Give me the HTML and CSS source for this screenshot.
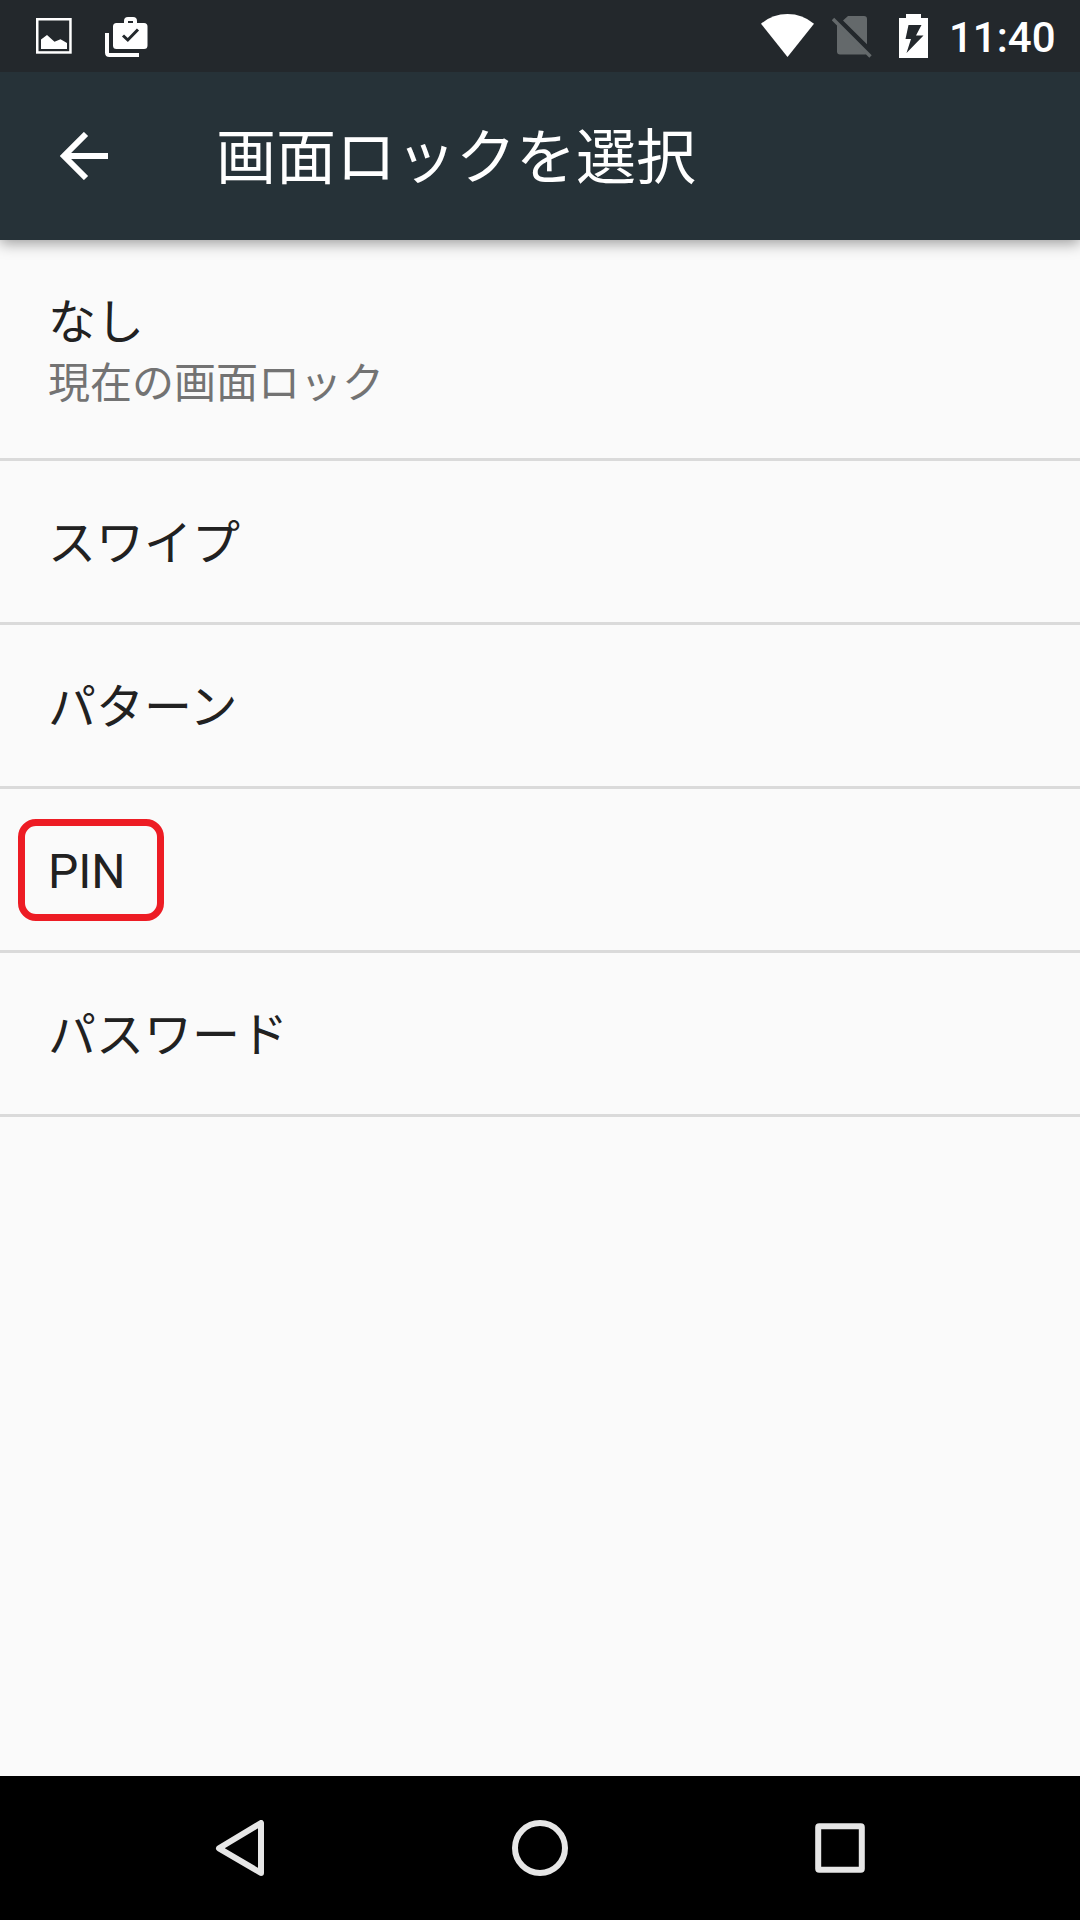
FILE: index.html
```html
<!DOCTYPE html>
<html lang="ja">
  <head>
    <meta charset="utf-8">
    <title>画面ロックを選択</title>
    <link rel="stylesheet" href="styles.css">
  </head>
  <body>
    <div class="screen">
      <div class="status-bar">
        <svg class="icon-picture" width="36" height="36" viewBox="0 0 36 36">
          <rect x="1.25" y="1.25" width="33.2" height="33.2" fill="none" stroke="#fff" stroke-width="2.5"/>
          <path d="M5 21.5L11 17L18.5 23.8L24.5 21.2L31 25V31H5Z" fill="#fff"/>
        </svg>
        <svg class="icon-shop" width="43" height="41" viewBox="0 0 43 41">
          <path d="M2 16V35.5Q2 38 4.500 38H34" fill="none" stroke="#fff" stroke-width="4"/>
          <path fill="#fff" fill-rule="evenodd" d="M11.500 6H19V4Q19 0 23 0H28Q32 0 32 4V6H39Q42.500 6 42.500 9.500V28.500Q42.500 32 39 32H11.500Q8 32 8 28.500V9.500Q8 6 11.500 6ZM23 4V6H28V4Z"/>
          <path d="M18 18.500L22.800 23L33 12.500" fill="none" stroke="#23282c" stroke-width="3"/>
        </svg>
        <div class="status-right">
          <svg width="53" height="43" viewBox="0 0 53 43">
            <path d="M0 9.700Q11.500 0 26.500 0T53 9.700L26.500 43Z" fill="#fff"/>
          </svg>
          <svg class="icon-sim" width="40" height="42" viewBox="0 0 40 42">
            <path d="M16 0H32Q35 0 35 3V28.300L11 4.500ZM5 8.500L34.500 38Q33.500 38.500 32 38.500H8Q5 38.500 5 35.500Z" fill="#64696b"/>
            <path d="M1 3L38.500 40.500" stroke="#64696b" stroke-width="3.400"/>
          </svg>
          <svg class="icon-battery" width="29" height="44" viewBox="0 0 29 44">
            <path d="M7 0H22V4H29V44H0V4H7Z" fill="#fff"/>
            <path d="M9.500 11H22.500L17 21.500H24.500L7.500 39L12 25H6.500Z" fill="#23282c"/>
          </svg>
          <span class="clock">11:40</span>
        </div>
      </div>
      <div class="app-bar">
        <svg width="48" height="48" viewBox="0 0 48 48">
          <path d="M48 24H6M26 2L4 24L26 46" fill="none" stroke="#fff" stroke-width="6"/>
        </svg>
        <h1>画面ロックを選択</h1>
      </div>
      <div class="list">
        <div class="item first">
          <span class="title">なし</span>
          <span class="summary">現在の画面ロック</span>
        </div>
        <div class="item"><span class="title">スワイプ</span></div>
        <div class="item"><span class="title">パターン</span></div>
        <div class="item"><span class="title">PIN</span><div class="highlight"></div></div>
        <div class="item"><span class="title">パスワード</span></div>
      </div>
      <div class="nav-bar">
        <svg width="56" height="56" viewBox="0 0 56 56">
          <path d="M49 3V53L7 28.300Z" fill="none" stroke="#e6e6e6" stroke-width="6" stroke-linejoin="round"/>
        </svg>
        <svg width="56" height="56" viewBox="0 0 56 56">
          <circle cx="28" cy="28" r="25" fill="none" stroke="#e6e6e6" stroke-width="6"/>
        </svg>
        <svg width="56" height="56" viewBox="0 0 56 56">
          <rect x="6.200" y="6.200" width="43.600" height="43.600" rx="1" fill="none" stroke="#e6e6e6" stroke-width="6"/>
        </svg>
      </div>
    </div>
  </body>
</html>
```
FILE: styles.css
```css
body {
  margin: 0;
  font-family: Roboto, "Noto Sans CJK JP", sans-serif;
}
svg {
  display: block;
  flex-shrink: 0;
}
.screen {
  display: flex;
  flex-direction: column;
  width: 1080px;
  height: 1920px;
  background-color: #fafafa;
}
.status-bar {
  position: relative;
  z-index: 1;
  display: flex;
  box-sizing: border-box;
  height: 72px;
  padding: 14px 26px 0 36px;
  background-color: #23282c;
}
.icon-picture {
  margin-top: 4px;
}
.icon-shop {
  margin: 3px 0 0 33px;
}
.status-right {
  display: flex;
  margin-left: auto;
}
.icon-sim {
  margin: 2px 0 0 18px;
}
.icon-battery {
  margin-left: 27px;
}
.clock {
  width: 105px;
  margin-left: 21px;
  color: #fff;
  font-size: 42px;
  font-weight: 500;
  line-height: 48px;
}
.app-bar {
  display: flex;
  align-items: center;
  height: 168px;
  padding-left: 60px;
  background-color: #263238;
  box-shadow: 0 3px 14px rgba(0, 0, 0, 0.4);
}
.app-bar h1 {
  margin: 5px 0 0 108px;
  color: #fff;
  font-size: 60px;
  font-weight: 400;
  line-height: 80px;
}
.list {
  flex: 1;
}
.item {
  position: relative;
  display: flex;
  flex-direction: column;
  justify-content: center;
  box-sizing: border-box;
  height: 164px;
  padding: 4px 48px 0;
  border-bottom: 3px solid #dadada;
}
.item.first {
  height: 221px;
}
.title {
  color: #212121;
  font-size: 48px;
  line-height: 64px;
}
.summary {
  color: #737373;
  font-size: 42px;
  line-height: 57px;
}
.highlight {
  position: absolute;
  left: 18px;
  top: 30px;
  box-sizing: border-box;
  width: 146px;
  height: 102px;
  border: 7px solid #ed1c24;
  border-radius: 18px;
}
.nav-bar {
  display: flex;
  align-items: center;
  justify-content: center;
  gap: 244px;
  height: 144px;
  background-color: #000;
}
```
